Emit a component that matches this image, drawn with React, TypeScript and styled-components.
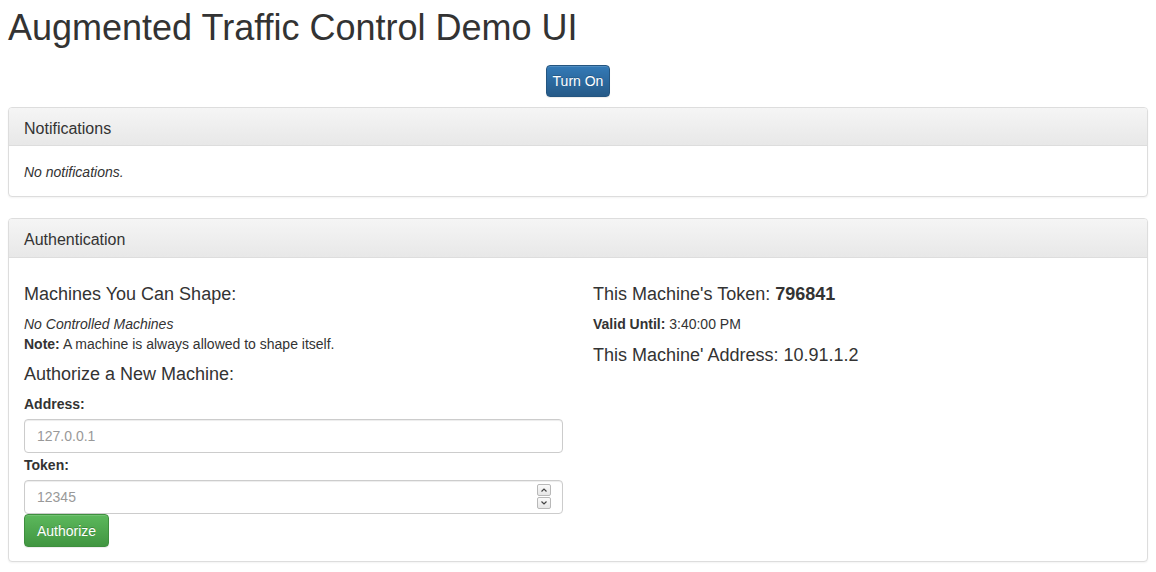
import React from 'react';
import styled, { createGlobalStyle } from 'styled-components';

const GlobalStyle = createGlobalStyle`
    html, body {
        margin: 0;
        padding: 0;
        background: #fff;
    }
    body {
        font-family: "Liberation Sans", Arial, Helvetica, sans-serif;
        font-size: 14px;
        line-height: 20px;
        color: #333;
    }
    * {
        box-sizing: border-box;
    }
`

const Page = styled.div`
    padding: 8px;
`

const Title = styled.h1`
    margin: 0 0 17px;
    font-size: 36px;
    font-weight: 400;
    line-height: 1.1;
    color: #333;
`

const Centered = styled.div`
    text-align: center;
    margin-bottom: 10px;
`

const Button = styled.button<{ variant: 'primary' | 'success' }>`
    display: inline-block;
    font-family: inherit;
    font-size: 14px;
    line-height: 20px;
    padding: ${props => props.variant === 'primary' ? '5px 6px' : '6px 12px 5px'};
    color: #fff;
    border-radius: 4px;
    border: 1px solid ${props => props.variant === 'primary' ? '#245580' : '#3e8f3e'};
    background-image: ${props => props.variant === 'primary'
        ? 'linear-gradient(to bottom, #337ab7 0%, #265a88 100%)'
        : 'linear-gradient(to bottom, #5cb85c 0%, #419641 100%)'};
    text-shadow: 0 -1px 0 rgba(0, 0, 0, 0.2);
    box-shadow: inset 0 1px 0 rgba(255, 255, 255, 0.15), 0 1px 1px rgba(0, 0, 0, 0.075);
    cursor: pointer;
`

const Panel = styled.section`
    margin-bottom: 21px;
    background: #fff;
    border: 1px solid #ddd;
    border-radius: 4px;
    box-shadow: 0 1px 2px rgba(0, 0, 0, 0.05);
`

const PanelHeading = styled.div`
    padding: 12px 15px 8px;
    border-bottom: 1px solid #ddd;
    border-radius: 3px 3px 0 0;
    background-image: linear-gradient(to bottom, #f5f5f5 0%, #e8e8e8 100%);
`

const PanelTitle = styled.h3`
    margin: 0;
    font-size: 16px;
    font-weight: 400;
    line-height: 1.1;
    color: #333;
`

const PanelBody = styled.div`
    padding: 16px 15px 14px;
`

const Muted = styled.div`
    font-style: italic;
`

const Columns = styled.div`
    display: grid;
    grid-template-columns: 1fr 1fr;
    column-gap: 30px;
    padding-top: 1px;
`

const Column = styled.div`
    display: flex;
    flex-direction: column;
    align-items: flex-start;
`

const SubHeading = styled.h4<{ $top?: number; $bottom?: number }>`
    margin: ${props => props.$top ?? 10}px 0 ${props => props.$bottom ?? 10}px;
    font-size: 18px;
    font-weight: 400;
    line-height: 1.1;
    color: #333;
`

const Line = styled.div``

const Label = styled.label<{ $top?: number; $bottom?: number }>`
    display: inline-block;
    margin: ${props => props.$top ?? 0}px 0 ${props => props.$bottom ?? 5}px;
    font-weight: 700;
`

const Field = styled.div`
    position: relative;
    width: 100%;
`

const Input = styled.input`
    display: block;
    width: 100%;
    height: 34px;
    padding: 6px 12px;
    font-family: inherit;
    font-size: 14px;
    line-height: 20px;
    color: #555;
    background: #fff;
    border: 1px solid #ccc;
    border-radius: 4px;
    box-shadow: inset 0 1px 1px rgba(0, 0, 0, 0.075);

    &::placeholder {
        color: #999;
    }
`

const Spinner = styled.div`
    position: absolute;
    top: 4px;
    right: 12px;
    display: flex;
    flex-direction: column;
    gap: 1px;
`

const SpinArrow = styled.div`
    width: 14px;
    height: 12px;
    border: 1px solid #b8b8b8;
    border-radius: 2px;
    background: linear-gradient(to bottom, #fafafa, #e6e6e6);
    display: flex;
    align-items: center;
    justify-content: center;
`

function Chevron(props: { up?: boolean }) {
    return (
        <svg width="8" height="6" viewBox="0 0 8 6">
            <path
                d={props.up ? 'M1.5 4.5 L4 2 L6.5 4.5' : 'M1.5 1.5 L4 4 L6.5 1.5'}
                fill="none"
                stroke="#444"
                strokeWidth="1.2"
            />
        </svg>
    );
}

export default function App() {
    return (
        <Page>
            <GlobalStyle />
            <Title>Augmented Traffic Control Demo UI</Title>
            <Centered>
                <Button variant="primary">Turn On</Button>
            </Centered>

            <Panel>
                <PanelHeading>
                    <PanelTitle>Notifications</PanelTitle>
                </PanelHeading>
                <PanelBody>
                    <Muted>No notifications.</Muted>
                </PanelBody>
            </Panel>

            <Panel>
                <PanelHeading>
                    <PanelTitle>Authentication</PanelTitle>
                </PanelHeading>
                <PanelBody>
                    <Columns>
                        <Column>
                            <SubHeading $bottom={9}>Machines You Can Shape:</SubHeading>
                            <Muted>No Controlled Machines</Muted>
                            <Line><b>Note:</b> A machine is always allowed to shape itself.</Line>
                            <SubHeading $top={11}>Authorize a New Machine:</SubHeading>
                            <Label>Address:</Label>
                            <Field>
                                <Input type="text" placeholder="127.0.0.1" />
                            </Field>
                            <Label $top={2}>Token:</Label>
                            <Field>
                                <Input type="text" placeholder="12345" />
                                <Spinner>
                                    <SpinArrow><Chevron up /></SpinArrow>
                                    <SpinArrow><Chevron /></SpinArrow>
                                </Spinner>
                            </Field>
                            <Button variant="success">Authorize</Button>
                        </Column>
                        <Column>
                            <SubHeading $bottom={9}>This Machine's Token: <b>796841</b></SubHeading>
                            <Line><b>Valid Until:</b> 3:40:00 PM</Line>
                            <SubHeading $top={12}>This Machine' Address: 10.91.1.2</SubHeading>
                        </Column>
                    </Columns>
                </PanelBody>
            </Panel>
        </Page>
    );
}
